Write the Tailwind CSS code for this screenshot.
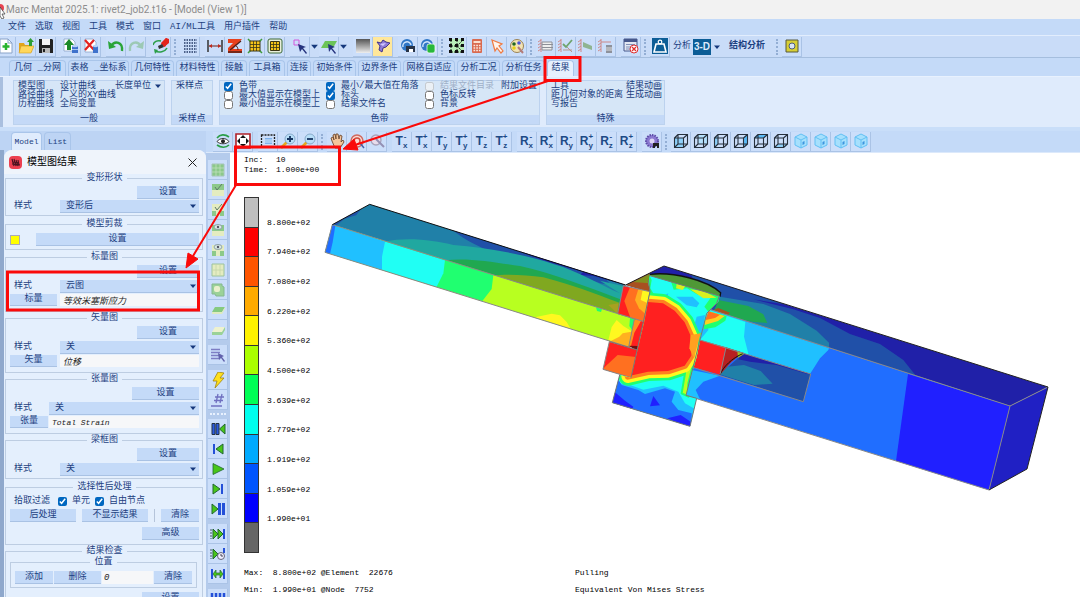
<!DOCTYPE html>
<html lang="zh-CN">
<head>
    <meta charset="UTF-8">
    <meta name="viewport" content="width=device-width, initial-scale=1.0">
    <title>Marc Mentat 2025.1</title>
    <script src="https://cdn.jsdelivr.net/npm/@tailwindcss/browser@4"></script>
</head>
<body class="relative h-screen overflow-hidden flex flex-col bg-[#c4daf8] text-[#1c4080] text-[9px] leading-[9px] font-['Liberation_Mono','Noto_Sans_CJK_SC',monospace]">

    <!-- icon sprite, every icon on a 16x16 grid -->
    <svg class="absolute size-0">
        <symbol id="new" viewBox="0 0 16 16"><path d="M2 1h8l4 4v10H2z" fill="#fff" stroke="#8aa3c8"/><path d="M10 1v4h4" fill="none" stroke="#8aa3c8"/><path d="M8 5v7M4.500 8.500h7" stroke="#28b42c" stroke-width="2.500"/></symbol>
        <symbol id="open" viewBox="0 0 16 16"><path d="M1 5h5l1 2h7v7H1z" fill="#e2a51b"/><path d="M3 8h13l-3 7H1z" fill="#ffd75c" stroke="#d29a20" stroke-width=".6"/><path d="M11 8V4h-2l3.500-4L16 4h-2v4z" fill="#2f9e35"/></symbol>
        <symbol id="save" viewBox="0 0 16 16"><path d="M1 1h13l1 1v13H1z" fill="#222"/><path d="M4 1h8v6H4z" fill="#f5f5f5"/><path d="M4 10h8v5H4z" fill="#bbb"/><path d="M5 11h2v3H5z" fill="#222"/></symbol>
        <symbol id="import" viewBox="0 0 16 16"><path d="M1 1h8l3 3v9H1z" fill="#fff" stroke="#8aa3c8" stroke-width=".8"/><path d="M4 12V7H1l5-6 5 6H8v5z" fill="#1c8a27"/><path d="M9 8h6v7H9z" fill="#3f72cc"/><ellipse cx="12" cy="8" rx="3" ry="1.300" fill="#b9d2f7"/><path d="M9 11.500h6" stroke="#a9c6f5"/></symbol>
        <symbol id="del" viewBox="0 0 16 16"><path d="M2 1h8l3 3v10H2z" fill="#fff" stroke="#8aa3c8" stroke-width=".8"/><path d="M2 2l9 10M11 2L2 12" stroke="#e42222" stroke-width="2.200"/><path d="M10 8h5v7h-5z" fill="#3f72cc"/><ellipse cx="12.500" cy="8" rx="2.500" ry="1.200" fill="#b9d2f7"/></symbol>
        <symbol id="undo" viewBox="0 0 16 16"><path d="M3 8c4-6 12-4 11 5" fill="none" stroke="#2aa438" stroke-width="2.300"/><path d="M0 3l1 8 7-2z" fill="#2aa438"/></symbol>
        <symbol id="redo" viewBox="0 0 16 16"><path d="M13 8C9 2 1 4 2 13" fill="none" stroke="#9cc9b4" stroke-width="2.300"/><path d="M16 3l-1 8-7-2z" fill="#9cc9b4"/></symbol>
        <symbol id="repaint" viewBox="0 0 16 16"><path d="M8 6l5-6 3 2-4 7z" fill="#e4241c"/><path d="M8 5l5-5 3 1 0 4-5 4z" fill="#e4241c"/><path d="M5 8l4-2 2 3-5 2z" fill="#333"/><path d="M0 7c1-3 4-5 8-4M14 10c-2 4-8 5-12 3" fill="none" stroke="#2b9e48" stroke-width="1.600"/><path d="M1 11l4 1-3 4z" fill="#2b9e48"/></symbol>
        <symbol id="dots" viewBox="0 0 16 16"><path d="M2 2h13M2 5h13M2 8h13M2 11h13M2 14h13" stroke="#243a66" stroke-width="1.500" stroke-dasharray="1.500 1"/></symbol>
        <symbol id="dist" viewBox="0 0 16 16"><path d="M1 2v12M15 2v12" stroke="#333" stroke-width="1.500"/><path d="M2 8h12" stroke="#803a34" stroke-width="1.200"/><path d="M2 8l3-2v4zM14 8l-3-2v4z" fill="#c02a1c"/></symbol>
        <symbol id="angle" viewBox="0 0 16 16"><path d="M1 1h14L6 11h9v4H1V10l5-5H1z" fill="#e8401c"/><path d="M14 3L3 12M1 14h14" fill="none" stroke="#502018" stroke-width="1.300"/><path d="M8 7c2 1 3 3 3 5" fill="none" stroke="#502018"/></symbol>
        <symbol id="mesh1" viewBox="0 0 16 16"><path d="M1 1l3 3M15 1l-3 3M1 15l3-3M15 15l-3-3" stroke="#3f9a3a" stroke-width="1.500"/><path d="M3 3h10v10H3z" fill="#f5c418" stroke="#3a3516"/><path d="M3 6.500h10M3 9.500h10M6.500 3v10M9.500 3v10" stroke="#3a3516" stroke-width=".8"/></symbol>
        <symbol id="mesh2" viewBox="0 0 16 16"><rect x="1" y="1" width="14" height="14" rx="2" fill="#e9efdc" stroke="#3f6a3a"/><path d="M3.500 3.500h9v9h-9z" fill="#f5c418" stroke="#3a3516"/><path d="M3.500 6.500h9M3.500 9.500h9M6.500 3.500v9M9.500 3.500v9" stroke="#3a3516" stroke-width=".8"/></symbol>
        <symbol id="pick" viewBox="0 0 16 16"><path d="M2 2h5v5H2z" fill="none" stroke="#d458dc"/><path d="M6 6l8 3-3 1 4 5-1 1-4-5-2 3z" fill="#26347e"/></symbol>
        <symbol id="face" viewBox="0 0 16 16"><path d="M4 3h12l-4 7H0z" fill="#6cc458"/><path d="M7 6l7 3-3 1 4 5-1 1-4-5-2 3z" fill="#26347e"/></symbol>
        <symbol id="shade" viewBox="0 0 16 16"><linearGradient id="gr" x2="0" y2="1"><stop stop-color="#555"/><stop offset="1" stop-color="#eee"/></linearGradient><path d="M1 1h14v14H1z" fill="url(#gr)"/></symbol>
        <symbol id="lamp" viewBox="0 0 16 16"><path d="M2 4l4 1 2-3 3 2 4 1-4 4-3 1-1 4-3-2 1-4z" fill="#8f7cd8" stroke="#43358b"/><path d="M5 6l6-1-3 3z" fill="#d2c8ff"/></symbol>
        <symbol id="cam1" viewBox="0 0 16 16"><circle cx="7" cy="7" r="6" fill="#2f76c6"/><path d="M3 9a4 4 0 0 1 8-2" fill="none" stroke="#cfe4fc" stroke-width="1.500"/><path d="M6 8h9v6h-2v-3H9v3H6z" fill="#283448"/><path d="M9 11h4v3H9z" fill="#fff"/></symbol>
        <symbol id="cam2" viewBox="0 0 16 16"><circle cx="7" cy="7" r="6" fill="#2f76c6"/><path d="M3 9a4 4 0 0 1 8-2" fill="none" stroke="#cfe4fc" stroke-width="1.500"/><rect x="7" y="6" width="8" height="9" rx="2" fill="#27b83b" stroke="#fff" stroke-width=".7"/></symbol>
        <symbol id="netw" viewBox="0 0 16 16"><path d="M1 1h14v14H1z" fill="#b9efb8"/><path d="M2 2v12M8 2v12M2 8h12M2 14h12M8 8l6-6M8 8l6 6" stroke="#222" stroke-dasharray="2 1"/><path d="M0 0h3v3H0zM6 0h3v3H6zM12 0h3v3h-3zM0 6h3v3H0zM6 6h3v3H6zM12 6h3v3h-3zM0 12h3v3H0zM6 12h3v3H6zM12 12h3v3h-3z" fill="#111"/></symbol>
        <symbol id="calc" viewBox="0 0 16 16"><rect x="3" y="1" width="10" height="14" rx="1" fill="#d96a50"/><path d="M4.500 3h7v2h-7z" fill="#fbe0cf"/><path d="M4.500 7.500h7M4.500 10h7M4.500 12.500h7" stroke="#fbe9df" stroke-width="1.500" stroke-dasharray="1.700 1"/></symbol>
        <symbol id="arrow" viewBox="0 0 16 16"><path d="M3 2l10 4-3 2 4 5-2 2-4-5-2 3z" fill="#fff4ec" stroke="#ef7b42" stroke-width="1.200"/></symbol>
        <symbol id="palette" viewBox="0 0 16 16"><circle cx="8" cy="8" r="6.500" fill="#f3e4b4" stroke="#9a8254"/><circle cx="5" cy="6" r="1.800" fill="#262"/><circle cx="10" cy="5" r="1.800" fill="#4b54d8"/><circle cx="5" cy="10" r="1.800" fill="#e8d018"/><path d="M9 9l5 6" stroke="#b47c7a" stroke-width="2"/></symbol>
        <symbol id="bc1" viewBox="0 0 16 16"><path d="M3 1v13" stroke="#c88"/><path d="M0 4l3-2M0 7l3-2M0 10l3-2M0 13l3-2" stroke="#c88"/><path d="M4 4h10v8H4zM4 6.500h11M4 9.500h11" fill="#eee" stroke="#8c8f97"/></symbol>
        <symbol id="bc2" viewBox="0 0 16 16"><path d="M3 1v13" stroke="#c88"/><path d="M0 4l3-2M0 7l3-2M0 10l3-2M0 13l3-2" stroke="#c88"/><path d="M5 6l3 3 6-7" fill="none" stroke="#6fa46e" stroke-width="1.800"/><path d="M5 12h9M9 9l5 5" stroke="#b9968c"/></symbol>
        <symbol id="bc3" viewBox="0 0 16 16"><path d="M3 1v13" stroke="#c88"/><path d="M0 4l3-2M0 7l3-2M0 10l3-2M0 13l3-2" stroke="#c88"/><path d="M5 4l9 4v4l-9-3z" fill="#8fb491"/></symbol>
        <symbol id="bc4" viewBox="0 0 16 16"><path d="M3 1v13M3 4h10" stroke="#c88"/><path d="M0 4l3-2M0 7l3-2M0 10l3-2M0 13l3-2" stroke="#c88"/><path d="M8 7h6v8H8z" fill="#8d919b"/><path d="M8 10h6M8 12h6" stroke="#ddd"/></symbol>
        <symbol id="close" viewBox="0 0 16 16"><path d="M1 1h13v12H1z" fill="#e2e7f2" stroke="#46588c"/><path d="M1 2.500h13" stroke="#46588c" stroke-width="3"/><path d="M3 6.500h9M3 9h5M3 11h4" stroke="#8090b8"/><circle cx="11" cy="11" r="4" fill="#fff" stroke="#e03030"/><path d="M9 9l4 4M13 9l-4 4" stroke="#e03030" stroke-width="1.300"/></symbol>
        <symbol id="weight" viewBox="0 0 16 16"><path d="M0 0h16v16H0z" fill="#0c5d96"/><path d="M4 6h8l2 8H2z" fill="none" stroke="#fff" stroke-width="1.600"/><circle cx="8" cy="4" r="1.800" fill="none" stroke="#fff" stroke-width="1.200"/></symbol>
        <symbol id="ring" viewBox="0 0 16 16"><path d="M2 2h12v12H2z" fill="#d8cf34" stroke="#56583c"/><circle cx="8" cy="8" r="3" fill="#d8e4f4" stroke="#4d5c7c"/></symbol>
        <symbol id="eye" viewBox="0 0 16 16"><path d="M2 5c3-4 8-4 12-1M14 12c-3 3-8 3-12 0" fill="none" stroke="#2b9e48" stroke-width="1.600"/><path d="M2 8.500c3-4 9-4 12 0-3 3-9 3-12 0z" fill="#fff" stroke="#333"/><circle cx="8" cy="8.300" r="2" fill="#222"/></symbol>
        <symbol id="fit" viewBox="0 0 16 16"><path d="M1 1h14v14H1z" fill="#fff" stroke="#b02028" stroke-width="1.600"/><path d="M8 2l3 3H5zM8 14l3-3H5zM2 8l3-3v6zM14 8l-3-3v6z" fill="#111"/></symbol>
        <symbol id="box" viewBox="0 0 16 16"><path d="M1.500 2h13v12h-13z" fill="none" stroke="#222" stroke-width="1.300" stroke-dasharray="2 1"/><path d="M5 5h7v6H5z" fill="#7fb2ec"/><path d="M5 7h7M5 9h7" stroke="#d7e8fb"/></symbol>
        <symbol id="zin" viewBox="0 0 16 16"><path d="M7 9l-6 6" stroke="#e3a820" stroke-width="2.600"/><circle cx="10" cy="6" r="5" fill="#b8def8" stroke="#88aacb"/><path d="M7 6h6M10 3v6" stroke="#163460" stroke-width="1.800"/></symbol>
        <symbol id="zout" viewBox="0 0 16 16"><path d="M7 9l-6 6" stroke="#e3a820" stroke-width="2.600"/><circle cx="10" cy="6" r="5" fill="#b8def8" stroke="#88aacb"/><path d="M7 6h6" stroke="#163460" stroke-width="1.800"/></symbol>
        <symbol id="hand" viewBox="0 0 16 16"><path d="M3 8L2 5l2-1 1 3-1-5 2-1 1 5V1h2l1 5 1-4 2 1-1 6 2-2 1 2-4 6H6z" fill="#f4c69c" stroke="#6e4a30" stroke-width=".9"/></symbol>
        <symbol id="rot" viewBox="0 0 16 16"><circle cx="8" cy="8" r="6" fill="#fbdad4" stroke="#cf6a60" stroke-width="1.500"/><path d="M5 8a3 3 0 1 1 3 3" fill="none" stroke="#cf4a3c" stroke-width="1.500"/><path d="M11 10l4 5" stroke="#4560a8" stroke-width="1.500"/></symbol>
        <symbol id="zsel" viewBox="0 0 16 16"><circle cx="7" cy="7" r="5" fill="#e7dcec" stroke="#a9a4bc" stroke-width="1.400"/><path d="M7 6l8 8" stroke="#9490b4" stroke-width="2"/></symbol>
        <symbol id="gear" viewBox="0 0 16 16"><circle cx="8" cy="8" r="6" fill="#8a78d0" stroke="#5d4ba8" stroke-width="2" stroke-dasharray="1.500 1"/><circle cx="8" cy="8" r="2.500" fill="#ddd6f5"/><path d="M9 10h6v5h-2v-2h-2v2H9z" fill="#222"/></symbol>
        <symbol id="wire" viewBox="0 0 16 16"><path d="M1.500 5h9v9.500h-9zM5 1.500h9.500V11H5zM1.500 5L5 1.500M10.500 5l4-3.500M10.500 14.500l4-3.500M1.500 14.500L5 11" fill="none" stroke="#26303c" stroke-width="1.100"/></symbol>
        <symbol id="c1" viewBox="0 0 16 16"><path d="M1 5h9v10H1z" fill="#8fd0fa"/><use href="#wire"/></symbol>
        <symbol id="c2" viewBox="0 0 16 16"><path d="M5 2h9v9H5z" fill="#b4e0fc"/><use href="#wire"/></symbol>
        <symbol id="c3" viewBox="0 0 16 16"><path d="M1 5l4-3v9l-4 4z" fill="#8fd0fa"/><use href="#wire"/></symbol>
        <symbol id="c4" viewBox="0 0 16 16"><path d="M10 5l5-4v10l-5 4z" fill="#5cbcf8"/><use href="#wire"/></symbol>
        <symbol id="c5" viewBox="0 0 16 16"><path d="M1 5l4-4h10l-4 4z" fill="#5cbcf8"/><use href="#wire"/></symbol>
        <symbol id="c6" viewBox="0 0 16 16"><path d="M1 15l4-4h10l-4 4z" fill="#8fd0fa"/><use href="#wire"/></symbol>
        <symbol id="iso" viewBox="0 0 16 16"><path d="M8 1l6 3v8l-6 3-6-3V4z" fill="#a6e0fd" stroke="#62c0f4"/><path d="M2 4l6 3 6-3M8 7v8" fill="none" stroke="#62c0f4"/><path d="M9.500 9l2-1v3l-2 1z" fill="#3c96e0"/></symbol>
        <symbol id="s1" viewBox="0 0 16 16"><path d="M2 2h12v12H2z" fill="#8cc98a" stroke="#a5c4b8"/><path d="M2 6h12M2 10h12M6 2v12M10 2v12" stroke="#bfe0bd" stroke-width=".8"/></symbol>
        <symbol id="s2" viewBox="0 0 16 16"><path d="M2 2h12v12H2z" fill="#e4ecc0"/><path d="M2 2h12v6H2z" fill="#8cc98a"/><path d="M5 5l2 3 5-6" fill="none" stroke="#5d7a68"/></symbol>
        <symbol id="s3" viewBox="0 0 16 16"><path d="M2 2h12v12H2z" fill="#e4ecc0"/><path d="M2 9h4v5H2zM10 9h4v5h-4z" fill="#8cc98a"/><path d="M5 5l2 3 5-6" fill="none" stroke="#5d7a68"/></symbol>
        <symbol id="s4" viewBox="0 0 16 16"><path d="M2 3h12v11H2z" fill="#e4ecc0"/><path d="M2 3h12v6H2z" fill="#8cc98a"/><ellipse cx="8" cy="5" rx="4" ry="2.500" fill="#d8e8e4" stroke="#7c9098" stroke-width=".8"/><circle cx="8" cy="5" r="1.200" fill="#556"/></symbol>
        <symbol id="s5" viewBox="0 0 16 16"><path d="M2 3h12v11H2z" fill="#e4ecc0"/><path d="M2 9h4v5H2zM10 9h4v5h-4z" fill="#8cc98a"/><ellipse cx="8" cy="5" rx="4" ry="2.500" fill="#d8e8e4" stroke="#7c9098" stroke-width=".8"/><circle cx="8" cy="5" r="1.200" fill="#556"/></symbol>
        <symbol id="s6" viewBox="0 0 16 16"><path d="M2 2h12v12H2z" fill="#e4ecc0" stroke="#9cc29c"/><path d="M6 2v12M10 2v12M2 8h12" stroke="#c3d6a8" stroke-width=".8"/></symbol>
        <symbol id="s7" viewBox="0 0 16 16"><path d="M2 2h10v2l2 1v9H6l-1-2H2z" fill="#9bd298" stroke="#85b890"/><rect x="4" y="4" width="6" height="6" rx="2" fill="#eaf0cc"/></symbol>
        <symbol id="s8" viewBox="0 0 16 16"><path d="M5 5h10l-3 5H2z" fill="#86ca80"/><path d="M2 10h10l3-5v2l-3 5H2z" fill="#dfeabf"/></symbol>
        <symbol id="s9" viewBox="0 0 16 16"><path d="M5 5h10l-3 5H2z" fill="#eef2cf"/><path d="M2 10h10l3-5v3l-3 5H2z" fill="#9bd298"/></symbol>
        <symbol id="list" viewBox="0 0 16 16"><path d="M1 2.500h9M1 5.500h9M1 8.500h9M1 11.500h9" stroke="#7d7dc4" stroke-width="1.600"/><path d="M8 6l6 3-2 1 3 4-1 1-3-4-2 2z" fill="#6262ac"/></symbol>
        <symbol id="bolt" viewBox="0 0 16 16"><path d="M8 0l6 1-4 5h4L5 16l2-7H3z" fill="#ffe01c" stroke="#a08414" stroke-width=".8"/></symbol>
        <symbol id="hash" viewBox="0 0 16 16"><path d="M8 2L6 11M12 2l-2 9M5 5h9M4 8.500h9" stroke="#7070c0" stroke-width="1.300"/><path d="M1 14h11" stroke="#7070c0" stroke-width="1.500"/></symbol>
        <symbol id="first" viewBox="0 0 16 16"><path d="M2 2.500h3v11H2zM6 2.500h3v11H6z" fill="#2c5ce0" stroke="#234"/><path d="M15 3v10L9.500 8z" fill="#48c618" stroke="#263"/></symbol>
        <symbol id="prev" viewBox="0 0 16 16"><path d="M3 3h2v10H3z" fill="#2450d8"/><path d="M13 3v10L6 8z" fill="#48c618" stroke="#263"/></symbol>
        <symbol id="play" viewBox="0 0 16 16"><path d="M3 2.500v11L14 8z" fill="#48c618" stroke="#263" stroke-width=".8"/></symbol>
        <symbol id="next" viewBox="0 0 16 16"><path d="M11 3h2v10h-2z" fill="#2450d8"/><path d="M3 3v10l7-5z" fill="#48c618" stroke="#263"/></symbol>
        <symbol id="last" viewBox="0 0 16 16"><path d="M8 2h3v12H8zM12 2h3v12h-3z" fill="#2450d8"/><path d="M2 3v10l6-5z" fill="#48c618" stroke="#263"/></symbol>
        <symbol id="skip" viewBox="0 0 16 16"><path d="M1 3v10" stroke="#456" stroke-dasharray="2 1"/><path d="M14 3v10" stroke="#2450d8" stroke-width="2"/><path d="M3 3v10l5-5zM8 3v10l5-5z" fill="#48c618" stroke="#263"/></symbol>
        <symbol id="clock" viewBox="0 0 16 16"><path d="M1 3v10" stroke="#456" stroke-dasharray="2 1"/><path d="M3 3v10l5-5z" fill="#48c618" stroke="#263"/><path d="M14 2v5" stroke="#2450d8" stroke-width="2"/><circle cx="11" cy="10" r="3.500" fill="#eef" stroke="#667"/><path d="M11 8v2h2" fill="none" stroke="#445"/></symbol>
        <symbol id="span" viewBox="0 0 16 16"><path d="M1 3h2v10H1zM13 3h2v10h-2z" fill="#2450d8"/><path d="M3 8l3-4v3h4V4l3 4-3 4V9H6v3z" fill="#48c618" stroke="#263" stroke-width=".7"/></symbol>
        <symbol id="bars" viewBox="0 0 16 16"><path d="M2 2v12M6 2v12M10 2v12M14 2v12" stroke="#2450d8" stroke-width="2.500"/></symbol>
        <symbol id="caret" viewBox="0 0 8 8"><path d="M1 2.500h6L4 6z" fill="#16387c"/></symbol>
    </svg>

    <!-- title bar -->
    <header class="h-[19px] shrink-0 bg-[#f2f2f2] flex items-center text-[#8d8d8d] text-[10px] font-['Roboto','Open_Sans',sans-serif]">
        <svg class="w-[6px] h-[18px]" viewBox="0 0 6 18"><circle cx="0" cy="7" r="4" fill="#e84350"/><path d="M0 6l5 7H2l2 4-2 1-2-3z" fill="#fff" stroke="#333" stroke-width=".7"/></svg>
        <h1 class="whitespace-nowrap">Marc Mentat 2025.1: rivet2_job2.t16 - [Model (View 1)]</h1>
    </header>

    <!-- menu -->
    <nav class="h-4 shrink-0 flex items-center gap-[9px] pl-2 whitespace-nowrap">
        <a href="#">文件</a><a href="#">选取</a><a href="#">视图</a><a href="#">工具</a><a href="#">模式</a><a href="#">窗口</a><a href="#">AI/ML工具</a><a href="#">用户插件</a><a href="#">帮助</a>
    </nav>

    <!-- main toolbar -->
    <div class="h-[23px] shrink-0 flex items-center border-t border-[#e2edfd] border-b border-b-[#a5bede] bg-[#c9dcf8] whitespace-nowrap">
        <div class="toolbar flex items-center -ml-1" data-icons="new open save - import del - undo redo - repaint | dots - dist angle mesh1 mesh2 - pick v face v - shade lamp* - cam1 cam2 | netw calc arrow palette | bc1 bc2 bc3 bc4 - close | weight"></div>
        <span class="ml-[3px] w-5">分析</span>
        <button class="w-[18px] h-4 bg-[#0c5d96] text-[#dceafb] text-[10px] font-bold font-['Liberation_Sans',sans-serif]">3-D</button>
        <svg class="w-2 h-2 ml-[2px]"><use href="#caret"/></svg>
        <b class="ml-2">结构分析</b>
        <div class="toolbar flex items-center ml-2" data-icons="| ring"></div>
    </div>

    <!-- ribbon tabs -->
    <nav class="h-[19px] shrink-0 flex items-end gap-[2px] pl-[9px] whitespace-nowrap border-b border-[#e8f1fe]">
        <button class="w-[57px] h-4 rounded-t border border-b-0 border-[#a9c5ea]">几何 _分网</button>
        <button class="w-[61px] h-4 rounded-t border border-b-0 border-[#a9c5ea]">表格 _坐标系</button>
        <button class="w-[43px] h-4 rounded-t border border-b-0 border-[#a9c5ea]">几何特性</button>
        <button class="w-[43px] h-4 rounded-t border border-b-0 border-[#a9c5ea]">材料特性</button>
        <button class="w-[26px] h-4 rounded-t border border-b-0 border-[#a9c5ea]">接触</button>
        <button class="w-[36px] h-4 rounded-t border border-b-0 border-[#a9c5ea]">工具箱</button>
        <button class="w-[24px] h-4 rounded-t border border-b-0 border-[#a9c5ea]">连接</button>
        <button class="w-[43px] h-4 rounded-t border border-b-0 border-[#a9c5ea]">初始条件</button>
        <button class="w-[43px] h-4 rounded-t border border-b-0 border-[#a9c5ea]">边界条件</button>
        <button class="w-[52px] h-4 rounded-t border border-b-0 border-[#a9c5ea]">网格自适应</button>
        <button class="w-[43px] h-4 rounded-t border border-b-0 border-[#a9c5ea]">分析工况</button>
        <button class="w-[43px] h-4 rounded-t border border-b-0 border-[#a9c5ea]">分析任务</button>
        <button class="w-[27px] h-4 rounded-t border border-b-0 border-[#a9c5ea] bg-[#e6f0fe]">结果</button>
    </nav>

    <!-- ribbon -->
    <div class="shrink-0 h-[50px] flex items-center gap-[6px] pl-[10px] bg-[#dfebfc] border-l-[3px] border-[#a9bfdf] whitespace-nowrap">
        <section class="w-[152px] h-[45px] flex flex-col justify-between bg-[#d6e6f7] border border-[#bcd2ee]">
            <div class="grid grid-cols-[42px_55px_1fr] pl-1 pt-px">
                <a href="#">模型图</a><a href="#">设计曲线</a><a href="#" class="flex items-center justify-between pr-[2px]">长度单位<svg class="w-2 h-2"><use href="#caret"/></svg></a>
                <a href="#">路径曲线</a><a href="#" class="col-span-2">广义的XY曲线</a>
                <a href="#">历程曲线</a><a href="#">全局变量</a>
            </div>
            <h2 class="bg-[#c4d9f7] text-center">一般</h2>
        </section>
        <section class="w-[42px] h-[45px] flex flex-col justify-between bg-[#d6e6f7] border border-[#bcd2ee]">
            <a href="#" class="pl-1 pt-px">采样点</a>
            <h2 class="bg-[#c4d9f7] text-center">采样点</h2>
        </section>
        <section class="w-[321px] h-[45px] flex flex-col justify-between bg-[#d6e6f7] border border-[#bcd2ee]">
            <div class="grid grid-cols-[102px_99px_76px_1fr] pl-1 pt-px">
                <label class="flex items-center gap-[6px]"><input type="checkbox" class="size-[9px] accent-[#0067c0]" checked>色带</label>
                <label class="flex items-center gap-[6px]"><input type="checkbox" class="size-[9px] accent-[#0067c0]" checked>最小/最大值在角落</label>
                <label class="flex items-center gap-[6px] text-[#9fb0c8]"><input type="checkbox" class="size-[9px] accent-[#0067c0]" disabled>结果文件目录</label>
                <a href="#">附加设置</a>
                <label class="flex items-center gap-[6px]"><input type="checkbox" class="size-[9px] accent-[#0067c0]">最大值显示在模型上</label>
                <label class="flex items-center gap-[6px]"><input type="checkbox" class="size-[9px] accent-[#0067c0]" checked>标头</label>
                <label class="flex items-center gap-[6px] col-span-2"><input type="checkbox" class="size-[9px] accent-[#0067c0]">色标反转</label>
                <label class="flex items-center gap-[6px]"><input type="checkbox" class="size-[9px] accent-[#0067c0]">最小值显示在模型上</label>
                <label class="flex items-center gap-[6px]"><input type="checkbox" class="size-[9px] accent-[#0067c0]">结果文件名</label>
                <label class="flex items-center gap-[6px]"><input type="checkbox" class="size-[9px] accent-[#0067c0]">背景</label>
            </div>
            <h2 class="bg-[#c4d9f7] text-center">色带</h2>
        </section>
        <section class="w-[119px] h-[45px] flex flex-col justify-between bg-[#d6e6f7] border border-[#bcd2ee]">
            <div class="grid grid-cols-[75px_1fr] pl-1 pt-px">
                <a href="#">工具</a><a href="#">结果动画</a>
                <a href="#">距几何对象的距离</a><a href="#">生成动画</a>
                <a href="#">写报告</a>
            </div>
            <h2 class="bg-[#c4d9f7] text-center">特殊</h2>
        </section>
    </div>

    <main class="flex-1 min-h-0 flex border-t-4 border-[#c9def9]">
        <!-- left dock -->
        <aside class="w-[206px] shrink-0 flex flex-col bg-[#bdd4f4] overflow-hidden">
            <div class="h-[19px] shrink-0 flex items-end gap-[2px] pl-[11px] text-[8px]">
                <button class="w-[31px] h-[18px] rounded-t border border-b-0 border-[#a9c5ea] bg-[#e0ecfd]">Model</button>
                <button class="w-[27px] h-[18px] rounded-t border border-b-0 border-[#a9c5ea]">List</button>
            </div>
            <div class="flex-1 border-l-4 border-[#8fa8cc]">
                <div class="rounded-t-lg bg-[#e4effd] overflow-hidden">
                    <div class="h-6 bg-[#eff4fb] flex items-center px-[5px] text-black text-[10px]">
                        <svg class="w-[13px] h-[13px] mr-[5px]" viewBox="0 0 13 13"><rect width="13" height="13" rx="4" fill="#ec4050"/><path d="M3 3l2 7M5 3l2 7M7 4l2 6M9 4l1 5M3 6l7 1M3 8l8 1" stroke="#4c1420" stroke-width="1.100"/></svg>
                        <span>模型图结果</span>
                        <button class="ml-auto mr-1" aria-label="关闭"><svg class="w-[9px] h-[9px]" viewBox="0 0 9 9"><path d="M.5.5l8 8M8.500.5l-8 8" stroke="#222"/></svg></button>
                    </div>
                    <form class="pl-[1px] pr-[3px]">
                        <fieldset class="min-w-0 border border-[#bdcde2] pl-1 pr-[3px] pb-[2px] mb-1">
                            <legend class="mx-auto px-1">变形形状</legend>
                            <div class="flex justify-end pt-[3px] pb-[1px]"><button type="button" class="w-[62px] h-[13px] bg-[#c4daf8] border-b border-[#a9c2e4]">设置</button></div>
                            <div class="flex items-center"><label for="deform" class="w-[50px] pl-1">样式</label>
                                <div class="flex-1 h-[13px] flex items-center bg-[#c4daf8] border-b border-[#a9c2e4]"><select id="deform" class="flex-1 h-3 leading-[12px] appearance-none px-[6px] bg-transparent"><option>变形后</option></select><svg class="w-2 h-2 mr-[2px]"><use href="#caret"/></svg></div></div>
                        </fieldset>
                        <fieldset class="min-w-0 border border-[#bdcde2] pl-1 pr-[3px] pb-[3px] mb-[3px]">
                            <legend class="mx-auto px-1">模型剪裁</legend>
                            <div class="flex items-center justify-between pt-1"><span class="size-[10px] bg-[#ffff00] border border-[#aab]"></span><button type="button" class="w-[163px] h-[13px] bg-[#c4daf8] border-b border-[#a9c2e4]">设置</button></div>
                        </fieldset>
                        <fieldset class="min-w-0 border border-[#bdcde2] pl-1 pr-[3px] pb-[5px] mb-[2px]">
                            <legend class="mx-auto px-1">标量图</legend>
                            <div class="flex justify-end pt-[3px] pb-[2px]"><button type="button" class="w-[62px] h-[13px] bg-[#c4daf8] border-b border-[#a9c2e4]">设置</button></div>
                            <div class="flex items-center mb-[1px]"><label for="scalar" class="w-[50px] pl-1">样式</label>
                                <div class="flex-1 h-[13px] flex items-center bg-[#c4daf8] border-b border-[#a9c2e4]"><select id="scalar" class="flex-1 h-3 leading-[12px] appearance-none px-[6px] bg-transparent"><option>云图</option></select><svg class="w-2 h-2 mr-[2px]"><use href="#caret"/></svg></div></div>
                            <div class="flex gap-[3px]"><button type="button" class="w-[47px] h-3 bg-[#c4daf8] border-b border-[#a9c2e4]">标量</button><input aria-label="标量" class="flex-1 w-0 h-3 bg-[#f6f7f9] text-[#222] italic px-[3px]" value="等效米塞斯应力"></div>
                        </fieldset>
                        <fieldset class="min-w-0 border border-[#bdcde2] pl-1 pr-[3px] pb-[5px] mb-[2px]">
                            <legend class="mx-auto px-1">矢量图</legend>
                            <div class="flex justify-end pt-[3px] pb-[2px]"><button type="button" class="w-[62px] h-[13px] bg-[#c4daf8] border-b border-[#a9c2e4]">设置</button></div>
                            <div class="flex items-center mb-[1px]"><label for="vector" class="w-[50px] pl-1">样式</label>
                                <div class="flex-1 h-[13px] flex items-center bg-[#c4daf8] border-b border-[#a9c2e4]"><select id="vector" class="flex-1 h-3 leading-[12px] appearance-none px-[6px] bg-transparent"><option>关</option></select><svg class="w-2 h-2 mr-[2px]"><use href="#caret"/></svg></div></div>
                            <div class="flex gap-[3px]"><button type="button" class="w-[47px] h-3 bg-[#c4daf8] border-b border-[#a9c2e4]">矢量</button><input aria-label="矢量" class="flex-1 w-0 h-3 bg-[#f6f7f9] text-[#222] italic px-[3px]" value="位移"></div>
                        </fieldset>
                        <fieldset class="min-w-0 border border-[#bdcde2] pl-1 pr-[3px] pb-[5px] mb-[2px]">
                            <legend class="mx-auto px-1">张量图</legend>
                            <div class="flex justify-end pt-[3px] pb-[2px]"><button type="button" class="w-[67px] h-[13px] bg-[#c4daf8] border-b border-[#a9c2e4]">设置</button></div>
                            <div class="flex items-center mb-[1px]"><label for="tensor" class="w-[39px] pl-1">样式</label>
                                <div class="flex-1 h-[13px] flex items-center bg-[#c4daf8] border-b border-[#a9c2e4]"><select id="tensor" class="flex-1 h-3 leading-[12px] appearance-none px-[6px] bg-transparent"><option>关</option></select><svg class="w-2 h-2 mr-[2px]"><use href="#caret"/></svg></div></div>
                            <div class="flex gap-[1px]"><button type="button" class="w-[38px] h-3 bg-[#c4daf8] border-b border-[#a9c2e4]">张量</button><input aria-label="张量" class="flex-1 w-0 h-3 bg-[#f6f7f9] text-[#222] text-[8px] italic px-[3px]" value="Total Strain"></div>
                        </fieldset>
                        <fieldset class="min-w-0 border border-[#bdcde2] pl-1 pr-[3px] pb-[2px] mb-1">
                            <legend class="mx-auto px-1">梁框图</legend>
                            <div class="flex justify-end pt-[3px] pb-[2px]"><button type="button" class="w-[62px] h-[13px] bg-[#c4daf8] border-b border-[#a9c2e4]">设置</button></div>
                            <div class="flex items-center"><label for="beam" class="w-[50px] pl-1">样式</label>
                                <div class="flex-1 h-[13px] flex items-center bg-[#c4daf8] border-b border-[#a9c2e4]"><select id="beam" class="flex-1 h-3 leading-[12px] appearance-none px-[6px] bg-transparent"><option>关</option></select><svg class="w-2 h-2 mr-[2px]"><use href="#caret"/></svg></div></div>
                        </fieldset>
                        <fieldset class="min-w-0 border border-[#bdcde2] pl-1 pr-[3px] pb-1 mb-[2px]">
                            <legend class="mx-auto px-1">选择性后处理</legend>
                            <div class="flex items-center gap-[5px] pl-1 pt-[5px] pb-[3px]"><span class="w-[39px]">拾取过滤</span>
                                <label class="flex items-center gap-[5px]"><input type="checkbox" class="size-[9px] accent-[#0067c0]" checked>单元</label>
                                <label class="flex items-center gap-[5px]"><input type="checkbox" class="size-[9px] accent-[#0067c0]" checked>自由节点</label></div>
                            <div class="flex justify-between">
                                <button type="button" class="w-[66px] h-[13px] bg-[#c4daf8] border-b border-[#a9c2e4]">后处理</button>
                                <button type="button" class="w-[66px] h-[13px] bg-[#c4daf8] border-b border-[#a9c2e4]">不显示结果</button>
                                <span class="w-px bg-[#b5c4da]"></span>
                                <button type="button" class="w-[38px] h-[13px] bg-[#c4daf8] border-b border-[#a9c2e4]">清除</button></div>
                            <div class="flex justify-end pt-[5px]"><button type="button" class="w-[57px] h-[13px] bg-[#c4daf8] border-b border-[#a9c2e4]">高级</button></div>
                        </fieldset>
                        <fieldset class="min-w-0 border border-[#bdcde2] border-b-0 pl-1 pr-[3px]">
                            <legend class="mx-auto px-1">结果检查</legend>
                            <fieldset class="min-w-0 border border-[#bdcde2] pl-1 pr-1 pb-[3px] mt-[2px] mb-1 mr-[2px]">
                                <legend class="mx-auto px-1">位置</legend>
                                <div class="flex gap-[1px] pt-1"><button type="button" class="w-[38px] h-[13px] bg-[#c4daf8] border-b border-[#a9c2e4]">添加</button><button type="button" class="w-[47px] h-[13px] bg-[#c4daf8] border-b border-[#a9c2e4]">删除</button><input aria-label="位置" class="flex-1 w-0 h-[13px] bg-[#f6f7f9] text-[#222] italic px-[2px]" value="0"><button type="button" class="w-[38px] h-[13px] bg-[#c4daf8] border-b border-[#a9c2e4]">清除</button></div>
                            </fieldset>
                            <div class="flex justify-end"><button type="button" class="w-[57px] h-[13px] bg-[#c4daf8] border-b border-[#a9c2e4]">设置</button></div>
                        </fieldset>
                    </form>
                </div>
            </div>
        </aside>

        <div class="flex-1 min-w-0 flex flex-col">
            <div class="toolbar h-[22px] shrink-0 flex items-center pl-[7px] border-b border-[#dce9fb] bg-[#c4daf8]" data-icons="eye fit - box zin zout | hand rot zsel - T-x T+x T-y T+y T-z T+z - R-x R+x R-y R+y R-z R+z - gear | c1 c2 c3 c4 c5 c6 iso iso iso iso"></div>
            <div class="flex-1 min-h-0 flex">
                <div class="toolbar-v w-6 shrink-0 flex flex-col items-center pt-[7px] overflow-hidden bg-[#b4cbec]" data-icons="s1 s2 s3 s4 s5 s6 s7 s8 s9 - list - bolt hash | first prev play next last - skip clock span - bars"></div>

                <!-- model view -->
                <section class="flex-1 min-w-0 bg-white text-black text-[8px] leading-[10px] pl-[14px] pt-[2px] overflow-hidden">
                    <dl class="grid grid-cols-[32px_1fr] mb-[22px]">
                        <dt>Inc:</dt><dd>10</dd>
                        <dt>Time:</dt><dd>1.000e+00</dd>
                    </dl>
                    <div class="flex h-[356px]">
                        <div class="w-[15px] flex flex-col border border-[#333] divide-y divide-[#333]">
                            <i class="flex-1 bg-[#bfbfbf]"></i><i class="flex-1 bg-[#ff0000]"></i><i class="flex-1 bg-[#ff5500]"></i><i class="flex-1 bg-[#ffaa00]"></i><i class="flex-1 bg-[#fff200]"></i><i class="flex-1 bg-[#aaff00]"></i><i class="flex-1 bg-[#00ff55]"></i><i class="flex-1 bg-[#00ffee]"></i><i class="flex-1 bg-[#00aaff]"></i><i class="flex-1 bg-[#0055ff]"></i><i class="flex-1 bg-[#0000ff]"></i><i class="flex-1 bg-[#666666]"></i>
                        </div>
                        <ol class="w-[61px] pl-2 flex flex-col leading-[8px]">
                            <li class="flex-1 flex items-end">8.800e+02</li>
                            <li class="flex-1 flex items-end">7.940e+02</li>
                            <li class="flex-1 flex items-end">7.080e+02</li>
                            <li class="flex-1 flex items-end">6.220e+02</li>
                            <li class="flex-1 flex items-end">5.360e+02</li>
                            <li class="flex-1 flex items-end">4.500e+02</li>
                            <li class="flex-1 flex items-end">3.639e+02</li>
                            <li class="flex-1 flex items-end">2.779e+02</li>
                            <li class="flex-1 flex items-end">1.919e+02</li>
                            <li class="flex-1 flex items-end">1.059e+02</li>
                            <li class="flex-1 flex items-end">1.990e+01</li>
                            <li class="flex-1"></li>
                        </ol>
                        <svg class="w-[740px] h-[310px] shrink-0" viewBox="0 21 2220 930" stroke-linejoin="round">
                            <clipPath id="rivet"><path d="M990 253C1060 245 1160 270 1202 308L1195 335 1165 365 1152 400 1130 500 1098 616 1130 625 1110 709 877 638 899 555 933 563 973 395 990 305 985 280z"/></clipPath>
                            <clipPath id="top"><path d="M917 285L1032 228 2184 591 2070 648 1180 362z"/></clipPath>
                            <!-- left plate, top face -->
                            <path d="M37 104L149 43 917 285 905 375 893 371z" fill="#2080a8"/>
                            <path d="M37 104L124 57 108 76 88 82 72 88 50 105z" fill="#2050a8"/>
                            <path d="M400 122L917 285 860 270 872 284 840 280C760 250 690 228 600 210 520 195 440 155 400 122z" fill="#2050a8"/>
                            <path d="M590 181L917 285 820 258 780 255 790 245C720 228 650 205 590 181z" fill="#2020a8"/>
                            <path d="M195 155C260 140 340 150 400 165 500 172 620 195 700 222 780 245 840 285 900 310L840 272 917 290 893 371z" fill="#20a8a0"/>
                            <path d="M375 211C440 202 520 216 600 228 700 250 800 290 901 328L893 371z" fill="#20a850"/>
                            <path d="M518 257C560 252 620 255 670 262 760 285 820 310 898 338L893 371z" fill="#80a820"/>
                            <path d="M865 345l30-5-2 31z" fill="#a8a020"/>
                            <!-- left plate, front face -->
                            <path d="M37 104L948 388 926 471 15 187z" fill="#b8ff20"/>
                            <path d="M37 104L520 255 515 297 487 333 15 187z" fill="#20ff70"/>
                            <path d="M37 104L375 211 370 250 350 290 15 187z" fill="#20fff4"/>
                            <path d="M37 104L195 155 186 200V239L15 187z" fill="#20c0ff"/>
                            <path d="M37 104l9 3-8 50-8 35-15-5z" fill="#206eff"/>
                            <path d="M645 382l50-11 25 5 20 20 12 20zM890 390l20 18 24 15-8 46-61-18 10-40z" fill="#fff820"/>
                            <path d="M868 455l30-15 10-10 26-5-8 46z" fill="#ffb020"/>
                            <path d="M828 352l18 6-3 8-12-3zM930 384l18 4-10 35-10-15z" fill="#20ff70"/>
                            <path d="M37 104L948 388M15 187L926 471M37 104L15 187" fill="none" stroke="#888" stroke-width="3"/>
                            <path d="M37 104L149 43 917 285" fill="none" stroke="#111" stroke-width="3"/>
                            <!-- right plate, top face -->
                            <g clip-path="url(#top)">
                                <path d="M900 200h1300v460H900z" fill="#2020a8"/>
                                <path d="M1110 250L1400 344 1300 328 1420 358 1500 384 1590 432 1680 462 1750 510 1790 560 1180 370z" fill="#2050a8"/>
                                <path d="M1200 320l130 22 80 30 80 50 37 36v24L1180 370z" fill="#2080a8"/>
                                <path d="M1195 330l90 18 45 25 12 26-45-4L1180 370z" fill="#20a850"/>
                                <path d="M1175 362l20-8 35 14-15 14z" fill="#a85020"/>
                                <path d="M900 300V200h90l-2 110z" fill="#a85020"/>
                                <path d="M940 276l48-24v28z" fill="#809020"/>
                            </g>
                            <!-- right plate, front faces -->
                            <path d="M1160 355L2070 648 2007 900 1098 616z" fill="#206eff"/>
                            <path d="M1160 355L1527 474 1525 480 1500 505 1470 552 1140 450z" fill="#20c0ff"/>
                            <path d="M1160 358L1276 396 1272 440 1286 495 1150 455 1140 450 1165 420z" fill="#20fff4"/>
                            <path d="M1160 362l60 16-4 14-30 20-35 6z" fill="#20ff70"/>
                            <path d="M1160 362l54 16-20 15-40 12z" fill="#ffd020"/>
                            <path d="M1160 362l40 12-15 10-28 6z" fill="#ff7020"/>
                            <path d="M1115 540L1200 557 1150 575 1127 600 1140 628 1098 616z" fill="#20c0ff"/>
                            <path d="M1764 552L2070 648 2007 900 1728 813z" fill="#2020ff"/>
                            <path d="M2070 648L2184 591 2121 837 2007 900z" fill="#2020c4"/>
                            <path d="M1270 490L1472 552 1450 635 1198 554z" fill="#2050a8"/>
                            <path d="M1270 490L1472 552 1462 552 1370 525 1290 515 1255 508z" fill="#2020a8"/>
                            <path d="M1222 530l50-5 50 18 36 38-56 4-104-32z" fill="#2080a8"/>
                            <path d="M1140 450L1218 472 1200 554 1118 532z" fill="#ff2020"/>
                            <path d="M1218 472L1270 488 1235 515 1200 554z" fill="#b82020"/>
                            <path d="M1252 483l22 8-20 12z" fill="#a8c020"/>
                            <path d="M1270 490C1235 505 1210 530 1200 554" fill="none" stroke="#111" stroke-width="3"/>
                            <path d="M1160 355L2070 648 2007 900 1098 616M2070 648L2184 591M1140 450L1472 552 1450 635 1118 532M1218 472L1200 554" fill="none" stroke="#888" stroke-width="3"/>
                            <path d="M917 285L1032 228 2184 591 2121 837 2007 900" fill="none" stroke="#222" stroke-width="3"/>
                            <!-- blocks left of the rivet -->
                            <path d="M910 287L990 305 973 395 893 371z" fill="#ff2020"/>
                            <path d="M930 292l60 13-17 90-42-12-18-50z" fill="#ff7020"/>
                            <path d="M955 297l35 8-13 68-20-18-12-25z" fill="#ffb020"/>
                            <path d="M968 300l22 5-6 35-22-10z" fill="#fff820"/>
                            <path d="M943 388L973 395 955 470 926 471z" fill="#ff2020"/>
                            <path d="M943 388l20 5-20 35-10 40-7 3z" fill="#ff9020"/>
                            <path d="M926 467L957 468 950 482z" fill="#701010"/>
                            <path d="M868 455L953 480 933 563 849 538z" fill="#ff2020"/>
                            <path d="M855 530l38-35 56 6-16 62-84-25z" fill="#ff7020"/>
                            <path d="M910 287L990 305M893 371L973 395 990 305M910 287L893 371M943 388L926 471M868 455L849 538 933 563" fill="none" stroke="#888" stroke-width="3"/>
                            <!-- rivet -->
                            <g clip-path="url(#rivet)">
                                <path d="M870 240h350v480H870z" fill="#20fff4"/>
                                <path d="M870 575l60 10 40 14 60-12 45 18 20 35 35 20v60H870z" fill="#20c0ff"/>
                                <path d="M890 560l15 25 50 15 20 12 60-17 30 10-10 30 20 25 40 10v50H870z" fill="#206eff"/>
                                <path d="M885 607l30 25 25 18-5 10-65-20zM1000 618l20 28-30 3zM1042 685l40-10 30 20v20z" fill="#2020ff"/>
                                <path d="M1068 320l50 0 20 20-8 12-30-6zM1130 380l25-5-10 60-25-20zM1030 318l15-8-4 14z" fill="#20c0ff"/>
                                <path d="M985 250l10 20-4 25 12 20-16 20zM1050 265l60 5 90 30-5 40-30 25-12-15 18-25-40-12-30-18-40 4z" fill="#20ff70"/>
                                <path d="M1070 282l26 6-8 12-20-5zM1110 298l40 5 40 20-40 2z" fill="#d8f020"/>
                                <path d="M984 336l45 4 35 22 30 35 18 40 2 60-20 30-50 16-60 2-60 14 30-120z" fill="#20ff70" stroke="#20ff70" stroke-width="56"/>
                                <path d="M1140 430l-15 70-20 80 0 40-20-10 10-60-10-70z" fill="#b8ff20" stroke="#20ff70" stroke-width="6"/>
                                <path d="M984 336l45 4 35 22 30 35 18 40 2 60-20 30-50 16-60 2-60 14 30-120z" fill="#fff820" stroke="#fff820" stroke-width="40"/>
                                <path d="M984 336l45 4 35 22 30 35 18 40 2 60-20 30-50 16-60 2-60 14 30-120z" fill="#ff7020" stroke="#ff8020" stroke-width="20"/>
                                <path d="M984 336l45 4 35 22 30 35 18 40 2 60-20 30-50 16-60 2-60 14 30-120z" fill="#ff2020"/>
                                <path d="M1112 435l30-5-20 75-14-30z" fill="#ffa020"/>
                                <path d="M990 253C1060 245 1160 270 1202 310L1198 318 990 257z" fill="#4f9836"/>
                            </g>
                            <path d="M990 253C1060 245 1160 270 1202 308L1200 320" fill="none" stroke="#111" stroke-width="4"/>
                            <path d="M990 257L1198 318 1190 340 1160 370 1098 616 1130 625 1110 709 877 638 899 555M985 270l5 35-57 258M953 480l-85-25" fill="none" stroke="#777" stroke-width="3"/>
                        </svg>
                    </div>
                    <div class="grid grid-cols-[331px_1fr] leading-[17px] mt-[11px] whitespace-pre">
                        <p>Max:  8.800e+02 @Element  22676</p><p>Pulling</p>
                        <p>Min:  1.990e+01 @Node  7752</p><p>Equivalent Von Mises Stress</p>
                    </div>
                </section>
            </div>
        </div>
    </main>

    <!-- red callouts over the window -->
    <svg class="absolute top-0 left-0 w-[600px] h-[320px] pointer-events-none" fill="none" stroke="#fa0a0a" stroke-width="3">
        <path d="M545 57.500h35v23h-35zM235.500 147h104v37.500h-104zM7.500 272h191v38h-191z"/>
        <path d="M548 81L355 145M236 185L193 256" stroke-width="2"/>
        <path d="M343 149l15 1-4-11zM186 268l12-9-10-6z" fill="#fa0a0a" stroke-width="1"/>
    </svg>

    <script>
        // "-" is a gap, "|" a drag grip, "v" a drop-down arrow, "*" marks the active tool
        function build(bar, vertical) {
            bar.innerHTML = bar.dataset.icons.split(" ").map(name => {
                if (name === "-") return vertical ? '<span class="h-[5px] shrink-0"></span>' : '<span class="w-[5px] shrink-0"></span>';
                if (name === "|") return vertical
                    ? '<span class="h-[3px] w-4 my-[3px] shrink-0 border-t-2 border-dotted border-[#e8f1fe]"></span>'
                    : '<span class="w-[3px] h-4 mx-[3px] shrink-0 border-l-2 border-dotted border-[#93aed4]"></span>';
                if (name === "v") return '<svg class="w-[9px] h-[9px] shrink-0"><use href="#caret"/></svg>';
                const view = name.match(/^([TR])([-+])(.)$/);
                if (view) return `<button class="size-5 shrink-0 flex items-center justify-center border-r border-b border-[#aac3e6] bg-[#cbdefa] font-bold font-['Liberation_Sans',sans-serif] text-[#1d4a86]"><span class="text-[12px]">${view[1]}</span><span class="flex flex-col text-[8px] leading-[9px]"><span>${view[2]}</span><span>${view[3]}</span></span></button>`;
                const active = name.endsWith("*");
                const id = name.replace("*", "");
                return `<button aria-label="${id}" class="size-5 shrink-0 flex items-center justify-center border-r border-b border-[#aac3e6] ${active ? "bg-[#ffe79a]" : "bg-[#cbdefa]"}"><svg class="w-4 h-4"><use href="#${id}"/></svg></button>`;
            }).join("");
        }
        document.querySelectorAll(".toolbar").forEach(bar => build(bar, false));
        document.querySelectorAll(".toolbar-v").forEach(bar => build(bar, true));
    </script>
</body>
</html>
